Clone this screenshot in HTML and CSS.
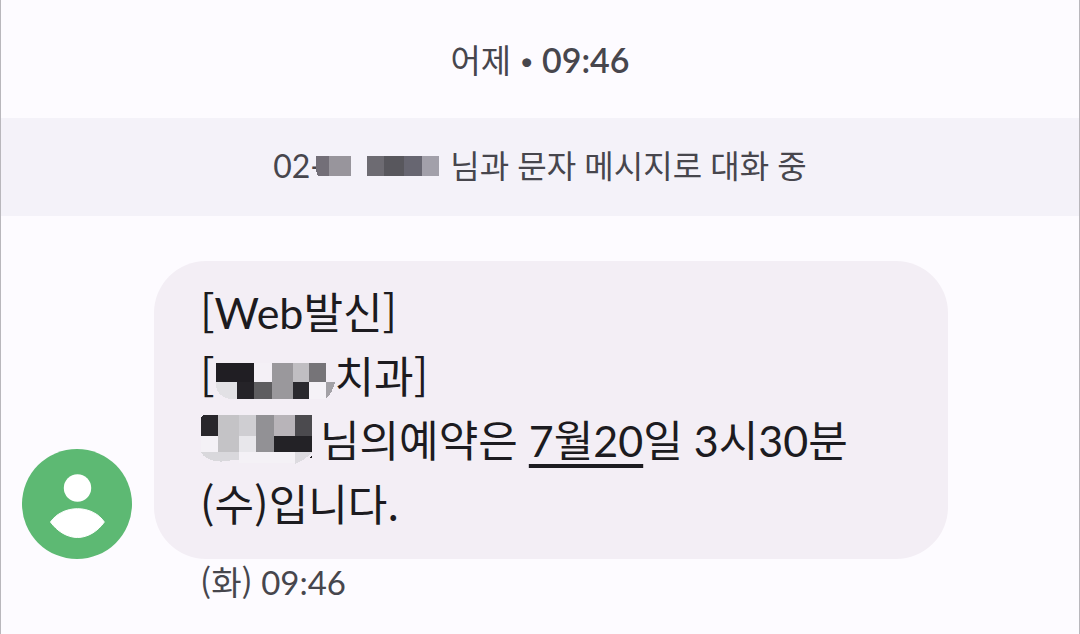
FILE: index.html
```html
<!DOCTYPE html>
<html lang="ko">
<head>
<meta charset="utf-8">
<meta name="viewport" content="width=device-width, initial-scale=1">
<title>메시지</title>
<link rel="stylesheet" href="styles.css">
</head>
<body>
<main class="conversation">
  <p class="day">어제 <span class="dot">•</span> <time class="day-time">09:46</time></p>
  <p class="notice"><span>02-</span><svg class="mask mask-phone" viewBox="0 0 134 22" aria-hidden="true" shape-rendering="crispEdges">
      <path d="M0 1H13V21H2L0 16Z" fill="#736f78"/>
      <path d="M13 1H35V21H13Z" fill="#98959c"/>
      <path d="M51 1H68V21H51Z" fill="#6d6b72"/>
      <path d="M68 1H88V21H68Z" fill="#58575d"/>
      <path d="M88 1H106V21H88Z" fill="#676671"/>
      <path d="M106 1H123V21H106Z" fill="#a2a0aa"/>
    </svg><span>님과 문자 메시지로 대화 중</span></p>
  <section class="message">
    <svg class="avatar" viewBox="0 0 110 110" role="img" aria-label="프로필">
      <circle cx="55" cy="55" r="55" fill="#5db973"/>
      <circle cx="55.500" cy="39" r="13.700" fill="#fff"/>
      <path d="M28.500 73C34 65 44 59.700 55.500 59.700S77 65 82.300 73C76 82 66 88.500 55.500 88.500S35 82 28.500 73Z" fill="#fff" stroke="#fff" stroke-width="1" stroke-linejoin="round"/>
    </svg>
    <div class="bubble">
      <p><span class="hangul">[</span>Web발신<span class="hangul">]</span></p>
      <p><span class="hangul">[</span><svg class="mask mask-clinic" viewBox="0 0 120 38" aria-hidden="true" shape-rendering="crispEdges">
        <path d="M1 1H39V20H1Z" fill="#201e23"/>
        <path d="M39 1H57V20H39Z" fill="#f4f0f6"/>
        <path d="M57 1H78V37H57Z" fill="#9a989c"/>
        <path d="M78 1H94V20H78Z" fill="#c0bec2"/>
        <path d="M94 1H111V20H94Z" fill="#767478"/>
        <path d="M1 20H22V37H14Q3 34 1 25Z" fill="#e2e1e5"/>
        <path d="M22 20H39V37H22Z" fill="#252328"/>
        <path d="M39 20H57V37H39Z" fill="#5e5d60"/>
        <path d="M78 20H94V37H78Z" fill="#2a292e"/>
        <path d="M94 20H111V37H94Z" fill="#f5f2f7"/>
        <path d="M111 20H120Q117 32 111 37Z" fill="#a3a1a6"/>
      </svg>치과<span class="hangul">]</span></p>
      <p><svg class="mask mask-name" viewBox="0 0 120 50" aria-hidden="true" shape-rendering="crispEdges">
        <path d="M1 2L3 0H18V21H1Z" fill="#28262b"/>
        <path d="M18 0H39V37H18Z" fill="#c4c3c6"/>
        <path d="M39 0H56V21H39Z" fill="#cfced2"/>
        <path d="M56 0H74V37H56Z" fill="#929195"/>
        <path d="M74 0H95V21H74Z" fill="#b8b4b9"/>
        <path d="M95 0H112V21H95Z" fill="#4b4a4e"/>
        <path d="M1 21H18V37H1Z" fill="#f4f1f6"/>
        <path d="M39 21H56V37H39Z" fill="#e8e7eb"/>
        <path d="M74 21H112V37H74Z" fill="#232226"/>
        <path d="M1 37H39V45H32Q18 49 7 43Q3 41 1 37Z" fill="#d9d8dc"/>
        <path d="M39 37H95V48H39Z" fill="#f4f1f6"/>
        <path d="M95 37H112Q107 44 95 49Z" fill="#dddbe0"/>
        <path d="M112 40V43H109Z" fill="#232226"/>
      </svg>님의예약은 <a class="date" href="#date">7월20</a>일 3시30분<br><span class="hangul">(수)입니다.</span></p>
    </div>
    <p class="stamp"><span class="hangul">(화)</span> <time>09:46</time></p>
  </section>
</main>
</body>
</html>
```
FILE: styles.css
```css
* {
  box-sizing: border-box;
}

body,
p {
  margin: 0;
}

body {
  background: #fdfbff;
  color: #47464d;
  font-family: Lato, "Noto Sans CJK KR", sans-serif;
  font-size: 33px;
  line-height: 48px;
}

.hangul {
  font-family: "Noto Sans CJK KR", sans-serif;
  line-height: 1;
}

.conversation {
  min-height: 100vh;
  border: solid #b9b7bc;
  border-width: 0 1px;
}

.day {
  padding: 36px 16px 34px;
  text-align: center;
}

.dot {
  font-size: 24px;
  line-height: 1;
  vertical-align: 3px;
}

.day-time {
  font-size: 34px;
  font-weight: 600;
  line-height: 1;
}

.notice {
  display: flex;
  align-items: center;
  justify-content: center;
  padding: 24px 16px 26px;
  background: #f4f2f9;
  font-size: 32px;
}

.mask {
  flex: none;
  overflow: visible;
}

.mask-phone {
  width: 134px;
  height: 22px;
  margin-left: -6px;
}

.message {
  display: grid;
  grid-template-columns: 110px minmax(0, 794px);
  column-gap: 22px;
  padding: 45px 21px 24px;
}

.avatar {
  width: 110px;
  height: 110px;
  align-self: end;
}

.bubble {
  padding: 20px 46px 22px;
  border-radius: 52px;
  background: #f3eef5;
  color: #1c1b20;
  font-size: 43px;
  line-height: 64px;
}

.mask-clinic {
  width: 120px;
  height: 38px;
  vertical-align: -7px;
}

.mask-name {
  width: 120px;
  height: 50px;
  vertical-align: -8px;
}

.date {
  color: inherit;
  text-decoration: underline;
  text-decoration-thickness: 4px;
  text-decoration-skip-ink: none;
  text-underline-offset: 7px;
}

.stamp {
  grid-column: 2;
  padding-left: 46px;
  line-height: 46px;
}
```
